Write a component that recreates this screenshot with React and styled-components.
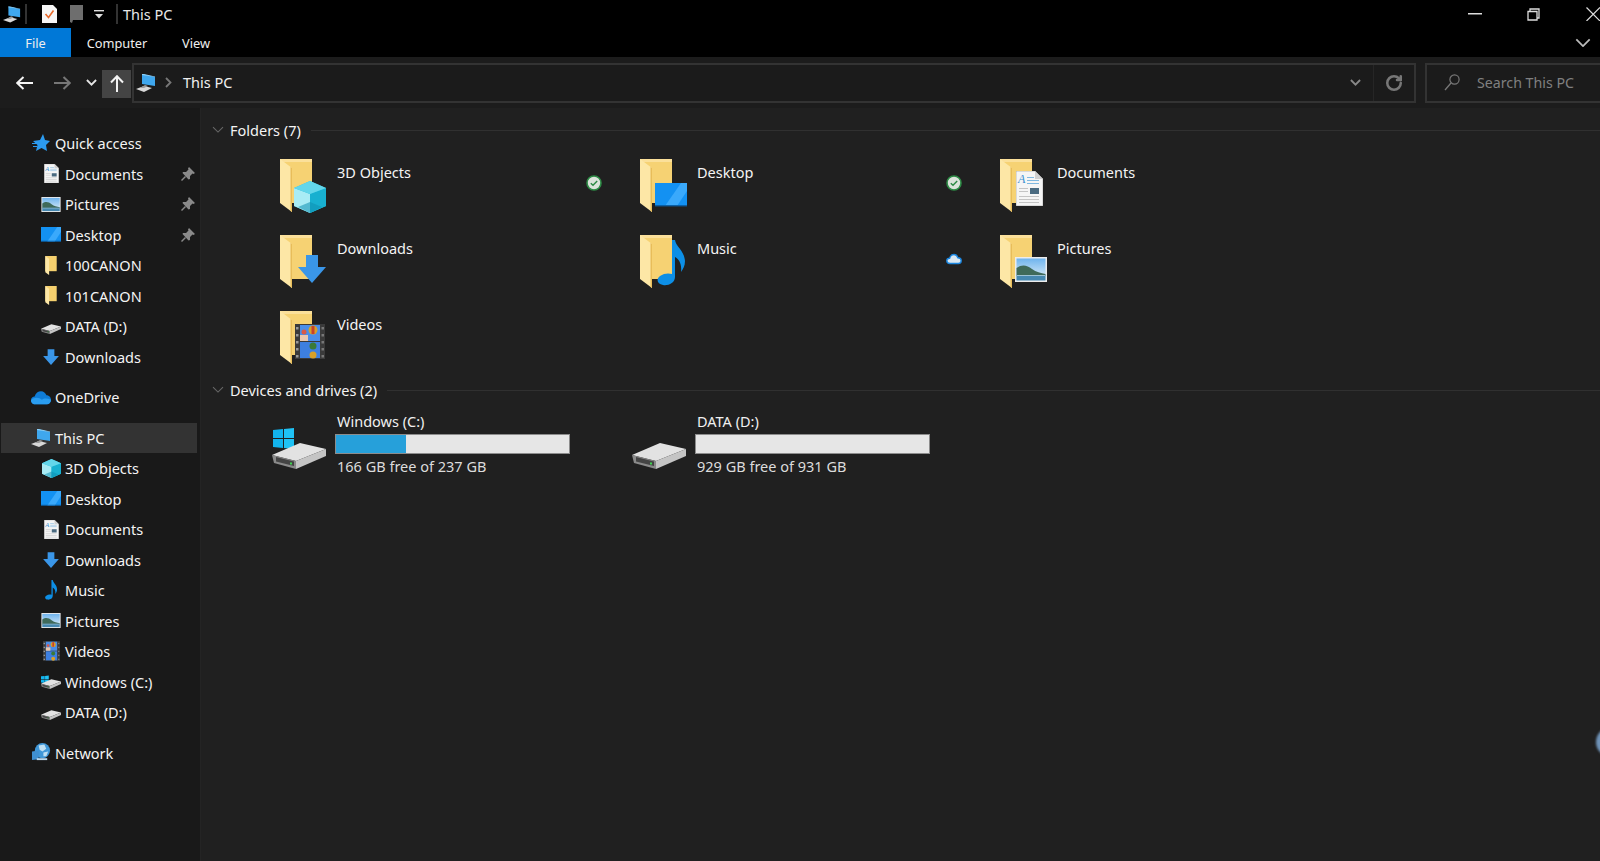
import React from 'react';
import styled, { createGlobalStyle } from 'styled-components';
import { RotateCw } from 'lucide-react';

const GlobalStyle = createGlobalStyle`
  html, body {
    margin: 0;
    height: 100%;
    background: #202020;
  }
  #root {
    height: 100%;
  }
`;

const Window = styled.div`
  position: relative;
  display: flex;
  flex-direction: column;
  height: 100vh;
  overflow: hidden;
  color: #f4f4f4;
  font-family: "Noto Sans", "Open Sans", sans-serif;
  font-size: 14.5px;
`;

const TitleBar = styled.header`
  display: flex;
  align-items: center;
  height: 28px;
  padding-left: 3px;
  background: #000;
`;

const QuickTool = styled.span`
  display: flex;
  align-items: center;
  justify-content: center;
  width: ${p => p.$w}px;
  margin-right: ${p => p.$mr || 0}px;
`;

const TitleDivider = styled.span`
  width: 2px;
  height: 20px;
  margin-left: ${p => p.$ml || 0}px;
  margin-right: ${p => p.$mr}px;
  background: #333;
`;

const TitleText = styled.span`
  color: #e8e8e8;
  font-size: 14.5px;
  margin-left: 1px;
`;

const WindowButtons = styled.div`
  display: flex;
  align-items: center;
  margin-left: auto;
`;

const WindowButton = styled.span`
  display: flex;
  width: ${p => p.$w}px;
`;

const TabBar = styled.nav`
  display: flex;
  align-items: center;
  height: 29px;
  background: #000;
`;

const Tab = styled.span`
  display: flex;
  align-items: center;
  justify-content: center;
  height: 100%;
  width: ${p => p.$w}px;
  background: ${p => (p.$active ? '#0078d7' : 'transparent')};
  color: #eee;
  font-size: 12.8px;
`;

const RibbonToggle = styled.span`
  display: flex;
  margin-left: auto;
  margin-right: 9px;
`;

const NavBar = styled.div`
  display: flex;
  align-items: center;
  height: 51px;
  background: #1c1c1c;
`;

const NavArrow = styled.span`
  display: flex;
  justify-content: center;
  width: ${p => p.$w}px;
  margin-left: ${p => p.$ml || 0}px;
`;

const UpButton = styled.span`
  display: flex;
  align-items: center;
  justify-content: center;
  width: 29px;
  height: 28px;
  margin-left: 5px;
  margin-top: 2px;
  background: #444;
`;

const AddressBox = styled.div`
  display: flex;
  align-items: center;
  width: 1284px;
  height: 40px;
  margin-left: 1px;
  box-sizing: border-box;
  border: 2px solid #333;
  background: #1b1b1b;
`;

const AddressIcon = styled.span`
  display: flex;
  margin-left: 2px;
  margin-right: 9px;
`;

const AddressCrumb = styled.span`
  margin-left: 11px;
  margin-top: -1px;
  font-size: 14.5px;
  color: #f0f0f0;
`;

const AddressEnd = styled.span`
  display: flex;
  align-items: center;
  margin-left: auto;
  height: 100%;
`;

const RefreshSlot = styled.span`
  display: flex;
  align-items: center;
  justify-content: center;
  width: 40px;
  height: 100%;
  margin-left: 12px;
  border-left: 1px solid #262626;
`;

const SearchBox = styled.div`
  display: flex;
  align-items: center;
  flex: 1;
  height: 40px;
  margin-left: 9px;
  padding-left: 17px;
  box-sizing: border-box;
  border: 2px solid #333;
  border-right: 0;
  background: #1b1b1b;
  color: #808080;
  font-size: 14.2px;
  gap: 17px;
`;

const Body = styled.div`
  display: flex;
  flex: 1;
  min-height: 0;
`;

const Sidebar = styled.aside`
  width: 201px;
  padding-top: 20px;
  box-sizing: border-box;
  background: #191919;
  border-right: 1px solid #242424;
`;

const NavGroup = styled.div`
  margin-bottom: 10px;
`;

const NavRow = styled.div`
  display: flex;
  align-items: center;
  height: 30.5px;
  width: 196px;
  margin-left: 1px;
  padding-left: ${p => (p.$sub ? 40 : 30)}px;
  padding-right: 2px;
  box-sizing: border-box;
  background: ${p => (p.$selected ? '#333' : 'transparent')};
`;

const NavIcon = styled.span`
  display: flex;
  align-items: center;
  justify-content: center;
  flex: none;
  width: 20px;
  height: 20px;
  margin-right: 4px;
`;

const PinSlot = styled.span`
  display: flex;
  margin-left: auto;
`;

const Content = styled.main`
  flex: 1;
  padding-top: 10px;
  background: #202020;
`;

const SectionHead = styled.div`
  display: flex;
  align-items: center;
  height: 24px;
  padding-left: 11px;
  font-size: 14.5px;
`;

const SectionTitle = styled.span`
  margin-left: 6px;
  white-space: nowrap;
`;

const SectionRule = styled.span`
  flex: 1;
  height: 1px;
  margin-left: 10px;
  background: #303030;
`;

const FolderGrid = styled.div`
  display: grid;
  grid-template-columns: repeat(3, 360px);
  grid-auto-rows: 67px;
  row-gap: 9px;
  padding-left: 79px;
  margin-top: 17px;
`;

const FolderTile = styled.div`
  display: grid;
  grid-template-columns: 54px 1fr 16px;
  column-gap: 3px;
  padding-right: 38px;
`;

const TileName = styled.span`
  margin-top: 3px;
  line-height: 20px;
  font-size: 14.5px;
`;

const TileStatus = styled.span`
  display: flex;
  margin-top: 16px;
`;

const DriveGrid = styled.div`
  display: grid;
  grid-template-columns: repeat(2, 360px);
  padding-left: 71px;
  padding-top: 9px;
`;

const DriveTile = styled.div`
  display: flex;
  gap: 9px;
`;

const DriveArt = styled.span`
  display: flex;
  margin-top: 8px;
`;

const DriveInfo = styled.div`
  width: 235px;
  font-size: 14.5px;
  line-height: 20px;
`;

const DriveText = styled.div`
  padding-left: 2px;
  color: ${p => p.$dim ? '#dcdcdc' : '#f0f0f0'};
  margin-top: ${p => p.$dim ? 2 : 0}px;
`;

const CapacityBar = styled.div`
  height: 20px;
  margin-top: 3px;
  box-sizing: border-box;
  border: 1px solid #8c8c8c;
  background: #e6e6e6;
`;

const CapacityFill = styled.div`
  height: 100%;
  background: #26a0da;
`;

const EdgeBlob = styled.span`
  position: absolute;
  left: 1596px;
  top: 727px;
  width: 30px;
  height: 30px;
  border-radius: 50%;
  background: #6f93b8;
  filter: blur(1px);
`;

const Art = ({ children, view = '0 0 32 32', ...rest }) => (
  <svg viewBox={view} {...rest}>{children}</svg>
);

const Cube = p => (
  <Art {...p}>
    <polygon points="16,0 32,7 32,25 16,32 0,25 0,7" fill="#2cc3dc" />
    <polygon points="0,7 16,13 16,32 0,25" fill="#a9ecf5" />
    <polygon points="16,13 32,7 32,25 16,32" fill="#18b0d0" />
    <polygon points="16,0 32,7 16,13 0,7" fill="#63d6ea" />
    <polygon points="4,26 16,21 28,26 16,32" fill="#0e8fb0" opacity=".55" />
  </Art>
);

const DownArrow = p => (
  <Art {...p}>
    <polygon points="10,2 22,2 22,14 30,14 16,30 2,14 10,14" fill="#3a96e8" />
  </Art>
);

const MonitorFlat = p => (
  <Art view="0 0 32 24" {...p}>
    <rect width="32" height="23" fill="#1391f2" />
    <polygon points="10,23 26,0 32,0 32,8 22,23" fill="#3aa9fb" />
    <rect y="22" width="32" height="1.4" fill="#0a5fa5" />
  </Art>
);

const Note = p => (
  <Art view="0 0 28 46" {...p}>
    <path d="M15 0 L18 0 C19 7 27 10 28 21 C28 26 26 29 24 32 C25 24 22 19 18 17 L18 37 C18 43 11 46 6 45 C0 44 -1 39 3 36 C7 33 12 33 15 34 Z" fill="#0d8fe6" />
  </Art>
);

const Doc = p => (
  <Art view="0 0 27 35" {...p}>
    <polygon points="0,0 19,0 27,8 27,35 0,35" fill="#f5f5f5" stroke="#999" strokeWidth=".6" />
    <polygon points="19,0 27,8 19,8" fill="#cfcfcf" />
    <text x="2" y="12" fontFamily="Liberation Serif" fontStyle="italic" fontSize="12" fill="#3a8fd0">A</text>
    <rect x="11" y="6" width="7" height="1" fill="#7fb8e0" />
    <rect x="11" y="9" width="12" height="1" fill="#7fb8e0" />
    <rect x="11" y="12" width="12" height="1" fill="#7fb8e0" />
    <rect x="14" y="17" width="9" height="6" fill="#4a6a80" />
    <rect x="3" y="17" width="9" height="1" fill="#c4c4c4" />
    <rect x="3" y="20" width="9" height="1" fill="#c4c4c4" />
    <rect x="3" y="25" width="20" height="1" fill="#c4c4c4" />
    <rect x="3" y="28" width="20" height="1" fill="#c4c4c4" />
    <rect x="3" y="31" width="20" height="1" fill="#c4c4c4" />
  </Art>
);

const Photo = p => (
  <Art view="0 0 32 25" {...p}>
    <defs>
      <linearGradient id="photoSky" x1="0" y1="0" x2="0" y2="1">
        <stop offset="0" stopColor="#6fb4ee" />
        <stop offset="1" stopColor="#e6f2f8" />
      </linearGradient>
    </defs>
    <rect width="32" height="25" fill="#ececec" />
    <rect x="1.5" y="1.5" width="29" height="22" fill="url(#photoSky)" />
    <path d="M1.5 11 C7 7 12 8 17 12 C21 15 26 16 30.5 17 L30.5 19 L1.5 19 Z" fill="#3f6a5a" />
    <rect x="1.5" y="18" width="29" height="5.5" fill="#4688b0" />
    <rect x="1.5" y="18" width="29" height="1" fill="#9cc2d4" />
  </Art>
);

const Film = p => (
  <Art view="0 0 30 35" {...p}>
    <rect width="30" height="35" fill="#3a3a3a" />
    <rect x="5" y="1" width="20" height="16" fill="#4a8ee8" />
    <rect x="5" y="18" width="20" height="16" fill="#3d7fe0" />
    <rect x="5" y="11" width="8" height="6" fill="#e8c8b0" />
    <circle cx="18" cy="6" r="4.5" fill="#d8a028" />
    <rect x="16.5" y="2" width="3" height="8" fill="#c8402c" />
    <circle cx="9" cy="8" r="2.5" fill="#d85a48" />
    <circle cx="18" cy="22" r="3.5" fill="#3a7a38" />
    <circle cx="18" cy="31" r="3.5" fill="#d8a028" />
    <rect x="1" y="3" width="2.5" height="2.5" fill="#999" />
    <rect x="1" y="10" width="2.5" height="2.5" fill="#999" />
    <rect x="1" y="17" width="2.5" height="2.5" fill="#999" />
    <rect x="1" y="24" width="2.5" height="2.5" fill="#999" />
    <rect x="1" y="31" width="2.5" height="2.5" fill="#999" />
    <rect x="26.5" y="3" width="2.5" height="2.5" fill="#777" />
    <rect x="26.5" y="10" width="2.5" height="2.5" fill="#777" />
    <rect x="26.5" y="17" width="2.5" height="2.5" fill="#777" />
    <rect x="26.5" y="24" width="2.5" height="2.5" fill="#777" />
    <rect x="26.5" y="31" width="2.5" height="2.5" fill="#777" />
  </Art>
);

const FolderShape = () => (
  <>
    <rect x="0" y="0" width="32" height="44" fill="#f6d273" />
    <rect x="0" y="0" width="32" height="3" fill="#fbe09a" />
    <polygon points="0,0 12,9 12,53 0,44" fill="#fde7a6" />
    <polygon points="12,9 12,53 10.5,52 10.5,8" fill="#e8bd5a" />
  </>
);

const FolderTileIcon = ({ children }) => (
  <svg width="54" height="54" viewBox="0 0 54 54">
    <FolderShape />
    {children}
  </svg>
);

const SmallFolder = p => (
  <Art view="0 0 14 20" {...p}>
    <rect x="1" y="0" width="12" height="16" fill="#f5d06e" />
    <polygon points="1,0 5,3 5,20 1,17" fill="#fde7a6" />
  </Art>
);

const DriveBody = () => (
  <>
    <polygon points="0,36 28,24 54,30 24,42" fill="#e2e2e2" />
    <polygon points="0,36 24,42 24,50 2,44" fill="#8a8a8a" />
    <polygon points="4,38 22,42.5 22,47 4,42.5" fill="#444" />
    <polygon points="24,42 54,30 54,37 24,50" fill="#c4c4c4" />
    <rect x="18" y="43.5" width="2" height="2" fill="#3fd44f" />
  </>
);

const WinLogo = ({ x = 1, y = 9, s = 10 }) => (
  <>
    <polygon points={`${x},${y + 2} ${x + s},${y + 1} ${x + s},${y + s} ${x},${y + s}`} fill="#12b4ee" />
    <polygon points={`${x + s + 1},${y + 1} ${x + 2 * s + 1},${y} ${x + 2 * s + 1},${y + s} ${x + s + 1},${y + s}`} fill="#1fc2f5" />
    <polygon points={`${x},${y + s + 1} ${x + s},${y + s + 1} ${x + s},${y + 2 * s} ${x},${y + 2 * s - 1}`} fill="#12b4ee" />
    <polygon points={`${x + s + 1},${y + s + 1} ${x + 2 * s + 1},${y + s + 1} ${x + 2 * s + 1},${y + 2 * s + 1} ${x + s + 1},${y + 2 * s}`} fill="#1fc2f5" />
  </>
);

const DriveIcon = ({ windows, ...rest }) => (
  <Art view="0 10 54 40" {...rest}>
    {windows && <WinLogo x={0} y={14} s={10} />}
    <DriveBody />
  </Art>
);

const BigDrive = ({ windows }) => (
  <svg width="54" height="54" viewBox="0 0 54 54">
    {windows && <WinLogo />}
    <DriveBody />
  </svg>
);

const ThisPC = p => (
  <Art view="0 0 20 20" {...p}>
    <polygon points="6,1 19,4 19,13 6,11" fill="#3fa7ee" />
    <polygon points="6,1 8,1 19,3.6 19,4 6,2" fill="#8ed0f8" />
    <polygon points="0,16 8,13 16,15 8,19" fill="#d8d8d8" />
    <polygon points="4,15 9,12 12,13 8,15" fill="#9a9a9a" />
  </Art>
);

const Star = p => (
  <Art view="0 0 18 18" {...p}>
    <polygon points="11,0 13,6 18,7 14,11 15,17 9.5,14 4,17 5.5,11 1,7 8,6" fill="#2c9bef" />
    <rect x="0" y="9" width="5" height="1" fill="#2c9bef" />
    <rect x="1" y="12" width="4" height="1" fill="#2c9bef" />
  </Art>
);

const OneDrive = p => (
  <Art view="0 0 22 15" {...p}>
    <path d="M5 15 C1 15 0 12 0 10.5 C0 8 2 6.5 4 6.5 C5 2.5 8 0.5 11 0.5 C14 0.5 16 2.5 17 5 C20 5 22 7.5 22 10 C22 13 20 15 17.5 15 Z" fill="#0f7cd6" />
    <path d="M5 15 C1 15 0 12 0 10.5 C3 7 9 7 12 10 C14 8 18 8 22 10 C22 13 20 15 17.5 15 Z" fill="#2a9df0" />
  </Art>
);

const Globe = p => (
  <Art view="0 0 20 20" {...p}>
    <circle cx="11" cy="8" r="8" fill="#3f97d8" />
    <path d="M7 2.5 L13 1.5 L15 6 L11 9 L8 7 Z M12 10 L17 9 L15 14 L12 14 Z" fill="#bfe0f4" />
    <polygon points="0,9 7,8 7,17 0,18" fill="#3f8fd0" />
    <rect x="5" y="16" width="11" height="2" fill="#b8d8ee" />
  </Art>
);

const Pin = () => (
  <svg width="14" height="14" viewBox="0 0 14 14">
    <polygon points="8,0 14,6 12.5,7 11.5,6.5 9,9 9,12 7.5,12.5 1.5,6 2,5 5,5 7.5,2.5 7,1.5" fill="#8a8a8a" />
    <line x1="0.5" y1="13.5" x2="4.5" y2="9.5" stroke="#8a8a8a" strokeWidth="1.4" />
  </svg>
);

const CheckBadge = () => (
  <svg width="16" height="16" viewBox="0 0 16 16">
    <circle cx="8" cy="8" r="7" fill="#dbe3db" stroke="#2c8a44" strokeWidth="1.6" />
    <path d="M4.8 8.2 L7 10.3 L11.2 6" fill="none" stroke="#2c8a44" strokeWidth="1.4" />
  </svg>
);

const CloudBadge = () => (
  <svg width="16" height="16" viewBox="0 0 16 16">
    <path d="M4 12.5 C1.5 12.5 0.8 10.8 0.8 9.8 C0.8 8.3 2 7.3 3.6 7.3 C4.2 5 6 3.5 8 3.5 C10 3.5 11.4 5 11.9 6.8 C13.8 6.8 15.2 8.2 15.2 9.8 C15.2 11.4 14 12.5 12.5 12.5 Z" fill="#dbe8f2" stroke="#1a86e0" strokeWidth="1.4" />
  </svg>
);

const Chevron = ({ size = 12, color = '#ddd', weight = 2 }) => (
  <svg width={size} height={size * 0.6} viewBox="0 0 12 7">
    <path d="M1 1 L6 6 L11 1" fill="none" stroke={color} strokeWidth={weight} />
  </svg>
);

const FlipWrap = styled.span`
  display: flex;
  transform: ${p => (p.$flip ? 'scaleX(-1)' : 'none')};
`;

const SideArrow = ({ color, flip }) => (
  <FlipWrap $flip={flip}>
    <svg width="18" height="14" viewBox="0 0 18 14">
      <path d="M1 7 H17 M7.5 1 L1.2 7 L7.5 13" fill="none" stroke={color} strokeWidth="2" />
    </svg>
  </FlipWrap>
);

const UpArrow = () => (
  <svg width="14" height="18" viewBox="0 0 14 18">
    <path d="M7 17 V1 M1 7.5 L7 1.2 L13 7.5" fill="none" stroke="#f4f4f4" strokeWidth="2" />
  </svg>
);

const SearchGlass = () => (
  <svg width="16" height="17" viewBox="0 0 16 17">
    <circle cx="10.5" cy="5.5" r="4.6" fill="none" stroke="#777" strokeWidth="1.2" />
    <line x1="7" y1="9" x2="1" y2="16" stroke="#777" strokeWidth="1.3" />
  </svg>
);

const quickAccess = [
  { label: 'Documents', icon: <Doc width="15" height="19" />, pinned: true },
  { label: 'Pictures', icon: <Photo width="20" height="15" />, pinned: true },
  { label: 'Desktop', icon: <MonitorFlat width="20" height="15" />, pinned: true },
  { label: '100CANON', icon: <SmallFolder width="14" height="19" /> },
  { label: '101CANON', icon: <SmallFolder width="14" height="19" /> },
  { label: 'DATA (D:)', icon: <DriveIcon width="20" height="15" /> },
  { label: 'Downloads', icon: <DownArrow width="18" height="18" /> },
];

const pcItems = [
  { label: '3D Objects', icon: <Cube width="19" height="19" /> },
  { label: 'Desktop', icon: <MonitorFlat width="20" height="15" /> },
  { label: 'Documents', icon: <Doc width="15" height="19" /> },
  { label: 'Downloads', icon: <DownArrow width="18" height="18" /> },
  { label: 'Music', icon: <Note width="14" height="20" /> },
  { label: 'Pictures', icon: <Photo width="20" height="15" /> },
  { label: 'Videos', icon: <Film width="17" height="20" /> },
  { label: 'Windows (C:)', icon: <DriveIcon windows width="20" height="15" /> },
  { label: 'DATA (D:)', icon: <DriveIcon width="20" height="15" /> },
];

const folders = [
  { name: '3D Objects', overlay: <Cube x="14" y="22" width="32" height="32" />, status: 'check' },
  { name: 'Desktop', overlay: <MonitorFlat x="15" y="24" width="32" height="24" />, status: 'check' },
  { name: 'Documents', overlay: <Doc x="16" y="12" width="27" height="35" /> },
  { name: 'Downloads', overlay: <DownArrow x="16" y="18" width="32" height="32" /> },
  { name: 'Music', overlay: <Note x="17" y="5" width="28" height="46" />, status: 'cloud' },
  { name: 'Pictures', overlay: <Photo x="15" y="22" width="32" height="25" /> },
  { name: 'Videos', overlay: <Film x="15" y="13" width="30" height="35" /> },
];

const drives = [
  { name: 'Windows (C:)', free: '166 GB free of 237 GB', used: 30, windows: true },
  { name: 'DATA (D:)', free: '929 GB free of 931 GB', used: 0 },
];

const SideRow = ({ item }) => (
  <NavRow $sub>
    <NavIcon>{item.icon}</NavIcon>
    {item.label}
    {item.pinned && <PinSlot><Pin /></PinSlot>}
  </NavRow>
);

export default function App() {
  return (
    <Window>
      <GlobalStyle />
      <TitleBar>
        <QuickTool $w={18}><ThisPC width="19" height="19" /></QuickTool>
        <TitleDivider $ml={4} $mr={13} />
        <QuickTool $w={18} $mr={10}>
          <svg width="15" height="18" viewBox="0 0 15 18">
            <polygon points="0,0 11,0 15,4 15,18 0,18" fill="#f6f6f6" />
            <path d="M3.5 9 L6.5 12.5 L11.5 5.5" fill="none" stroke="#e8692a" strokeWidth="1.6" />
          </svg>
        </QuickTool>
        <QuickTool $w={16} $mr={9}>
          <svg width="13" height="18" viewBox="0 0 13 18">
            <polygon points="0,0 13,0 13,15 3,15 2,18 0,17" fill="#6e6e6e" />
          </svg>
        </QuickTool>
        <QuickTool $w={12} $mr={11}>
          <svg width="10" height="9" viewBox="0 0 10 9">
            <rect width="10" height="1.4" fill="#ddd" />
            <polygon points="1,4 9,4 5,8.5" fill="#ddd" />
          </svg>
        </QuickTool>
        <TitleDivider $mr={4} />
        <TitleText>This PC</TitleText>
        <WindowButtons>
          <WindowButton $w={59}>
            <svg width="14" height="2" viewBox="0 0 14 2"><rect width="14" height="1.5" fill="#ddd" /></svg>
          </WindowButton>
          <WindowButton $w={59}>
            <svg width="13" height="13" viewBox="0 0 13 13">
              <path d="M3 3 V1 H12 V10 H10 M1 3.5 H10 V12 H1 Z" fill="none" stroke="#ddd" strokeWidth="1.3" />
            </svg>
          </WindowButton>
          <WindowButton $w={14}>
            <svg width="14" height="14" viewBox="0 0 14 14">
              <path d="M0.5 0.5 L14 14 M14 0.5 L0.5 14" fill="none" stroke="#ddd" strokeWidth="1.2" />
            </svg>
          </WindowButton>
        </WindowButtons>
      </TitleBar>

      <TabBar>
        <Tab $active $w={71}>File</Tab>
        <Tab $w={92}>Computer</Tab>
        <Tab $w={66}>View</Tab>
        <RibbonToggle><Chevron size={16} color="#bbb" weight={1.3} /></RibbonToggle>
      </TabBar>

      <NavBar>
        <NavArrow $w={18} $ml={16}><SideArrow color="#f4f4f4" /></NavArrow>
        <NavArrow $w={18} $ml={19}><SideArrow color="#777" flip /></NavArrow>
        <NavArrow $w={12} $ml={14}><Chevron size={11} color="#e4e4e4" /></NavArrow>
        <UpButton><UpArrow /></UpButton>
        <AddressBox>
          <AddressIcon><ThisPC width="20" height="20" /></AddressIcon>
          <svg width="7" height="11" viewBox="0 0 7 11"><path d="M1 1 L5.5 5.5 L1 10" fill="none" stroke="#777" strokeWidth="1.8" /></svg>
          <AddressCrumb>This PC</AddressCrumb>
          <AddressEnd>
            <Chevron size={11} color="#888" />
            <RefreshSlot><RotateCw size={18} color="#777" strokeWidth={3.4} /></RefreshSlot>
          </AddressEnd>
        </AddressBox>
        <SearchBox>
          <SearchGlass />
          Search This PC
        </SearchBox>
      </NavBar>

      <Body>
        <Sidebar>
          <NavGroup>
            <NavRow><NavIcon><Star width="18" height="18" /></NavIcon>Quick access</NavRow>
            {quickAccess.map(item => <SideRow key={item.label} item={item} />)}
          </NavGroup>
          <NavGroup>
            <NavRow><NavIcon><OneDrive width="21" height="15" /></NavIcon>OneDrive</NavRow>
          </NavGroup>
          <NavGroup>
            <NavRow $selected><NavIcon><ThisPC width="20" height="20" /></NavIcon>This PC</NavRow>
            {pcItems.map(item => <SideRow key={item.label} item={item} />)}
          </NavGroup>
          <NavRow><NavIcon><Globe width="19" height="19" /></NavIcon>Network</NavRow>
        </Sidebar>

        <Content>
          <SectionHead>
            <Chevron size={12} color="#666" weight={1.1} />
            <SectionTitle>Folders (7)</SectionTitle>
            <SectionRule />
          </SectionHead>
          <FolderGrid>
            {folders.map(f => (
              <FolderTile key={f.name}>
                <FolderTileIcon>{f.overlay}</FolderTileIcon>
                <TileName>{f.name}</TileName>
                <TileStatus>
                  {f.status === 'check' && <CheckBadge />}
                  {f.status === 'cloud' && <CloudBadge />}
                </TileStatus>
              </FolderTile>
            ))}
          </FolderGrid>
          <SectionHead>
            <Chevron size={12} color="#666" weight={1.1} />
            <SectionTitle>Devices and drives (2)</SectionTitle>
            <SectionRule />
          </SectionHead>
          <DriveGrid>
            {drives.map(d => (
              <DriveTile key={d.name}>
                <DriveArt><BigDrive windows={d.windows} /></DriveArt>
                <DriveInfo>
                  <DriveText>{d.name}</DriveText>
                  <CapacityBar>
                    <CapacityFill style={{ width: `${d.used}%` }} />
                  </CapacityBar>
                  <DriveText $dim>{d.free}</DriveText>
                </DriveInfo>
              </DriveTile>
            ))}
          </DriveGrid>
        </Content>
      </Body>
      <EdgeBlob />
    </Window>
  );
}
